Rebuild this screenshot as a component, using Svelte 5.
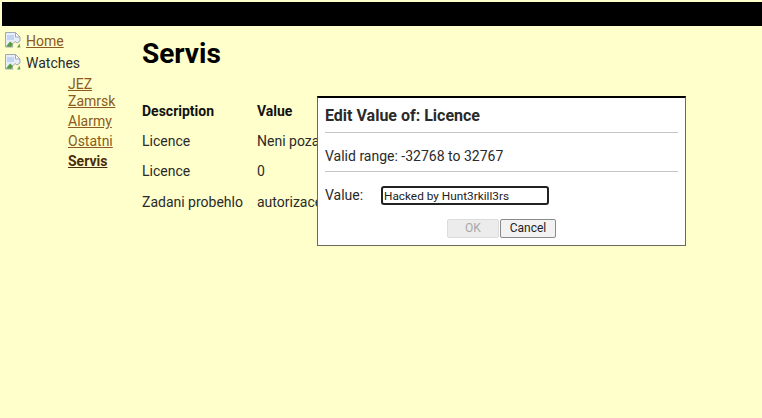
<script>
  const subs = ['JEZ', 'Zamrsk', 'Alarmy', 'Ostatni'];
  const rows = [
    ['Licence', 'Neni pozadovana'],
    ['Licence', '0'],
    ['Zadani probehlo', 'autorizace']
  ];
</script>

{#snippet broken()}
  <svg class="broken" viewBox="0 0 16 16">
    <path d="M0.5 0.5h10l4.5 4.5v4l-3 2-2-1.5-3 3 1 2.500h-7.500z" fill="#e8eef8" stroke="#a3a9b2"/>
    <path d="M2 3h7v5H2z" fill="#c3d5f2"/>
    <path d="M1 14.500l4-5 3 2.500-2 3z" fill="#5b9a45"/>
    <path d="M10.500 0.500v4.500h4.500z" fill="#fff" stroke="#a3a9b2"/>
    <path d="M12 15.500l2.500-4 1 4z" fill="#6ba653"/>
  </svg>
{/snippet}

<div class="page">
  <header class="bar"></header>
  <div class="body">
    <nav class="side">
      <div class="top">
        {@render broken()}
        <a href="#home">Home</a>
      </div>
      <div class="top">
        {@render broken()}
        <span>Watches</span>
      </div>
      <div class="subs">
        {#each subs as s}
          <a href="#s" class:tight={s === 'JEZ'}>{s}</a>
        {/each}
        <a href="#s" class="active">Servis</a>
      </div>
    </nav>
    <main class="main">
      <h1>Servis</h1>
      <div class="table">
        <b class="c1">Description</b><b>Value</b>
        {#each rows as r}
          <span>{r[0]}</span><span class="val">{r[1]}</span>
        {/each}
      </div>
    </main>
  </div>

  <div class="dialog">
    <div class="title">Edit Value of: Licence</div>
    <div class="range">Valid range: -32768 to 32767</div>
    <div class="value">
      <label for="v">Value:</label>
      <input id="v" value="Hacked by Hunt3rkill3rs" />
    </div>
    <div class="buttons">
      <button disabled>OK</button>
      <button>Cancel</button>
    </div>
  </div>
</div>

<style>
  :global(body) {
    margin: 0;
    background: #ffffcc;
  }
  .page {
    position: relative;
    height: 418px;
    overflow: hidden;
    background: #ffffcc;
    font-family: Roboto, sans-serif;
    font-size: 14px;
    color: #2a2a2a;
    padding-top: 2px;
    box-sizing: border-box;
  }
  .bar {
    height: 24px;
    margin-left: 2px;
    background: #000;
  }
  .body {
    display: flex;
  }
  .side {
    width: 142px;
    flex: none;
    padding-top: 6px;
    box-sizing: border-box;
  }
  .top {
    display: flex;
    align-items: flex-start;
    padding-left: 5px;
    height: 22px;
    line-height: 18px;
    gap: 5px;
  }
  .broken {
    width: 16px;
    height: 16px;
    flex: none;
  }
  a {
    color: #8a5a20;
  }
  .subs {
    display: flex;
    flex-direction: column;
    align-items: flex-start;
    padding-left: 68px;
  }
  .subs a {
    line-height: 17px;
    margin-bottom: 3px;
  }
  .subs a.tight {
    margin-bottom: 0;
  }
  .subs a.active {
    color: #4a2c0a;
    font-weight: 700;
  }
  h1 {
    margin: 13px 0 0;
    font-size: 28px;
    line-height: 30px;
    font-weight: 700;
    color: #000;
  }
  .table {
    display: grid;
    grid-template-columns: 115px auto;
    grid-template-rows: 30px 30px 30px 31px;
    margin-top: 27px;
    align-items: center;
    line-height: 16px;
  }
  .table b {
    color: #111;
  }
  .val {
    white-space: nowrap;
  }
  .dialog {
    position: absolute;
    left: 317px;
    top: 96px;
    width: 369px;
    height: 150px;
    box-sizing: border-box;
    background: #fff;
    border: 1px solid #6a6a58;
    border-top: 2px solid #000;
    padding: 0 7px;
  }
  .title {
    font-size: 16px;
    font-weight: 700;
    line-height: 19px;
    padding: 8px 0 7px;
    border-bottom: 1px solid #c4c4c4;
  }
  .range {
    line-height: 18px;
    padding: 14px 0 6px;
    border-bottom: 1px solid #c4c4c4;
  }
  .value {
    display: flex;
    align-items: center;
    margin-top: 14px;
  }
  label {
    width: 56px;
    flex: none;
    position: relative;
    top: -1px;
  }
  input {
    width: 168px;
    height: 19px;
    box-sizing: border-box;
    border: 2px solid #222;
    border-radius: 3px;
    padding: 0 1px;
    font: 11.8px Roboto, sans-serif;
    color: #222;
    outline: none;
  }
  .buttons {
    display: flex;
    justify-content: center;
    gap: 1px;
    margin-top: 14px;
  }
  button {
    width: 56px;
    height: 19px;
    box-sizing: border-box;
    border: 1px solid #8a8a8a;
    border-radius: 2px;
    background: #f2f2f2;
    font: 12px Roboto, sans-serif;
    color: #222;
    padding: 0 0 1px;
  }
  button:disabled {
    width: 52px;
    border-color: #dcdcdc;
    background: #ececec;
    color: #a8a8a8;
  }
</style>
